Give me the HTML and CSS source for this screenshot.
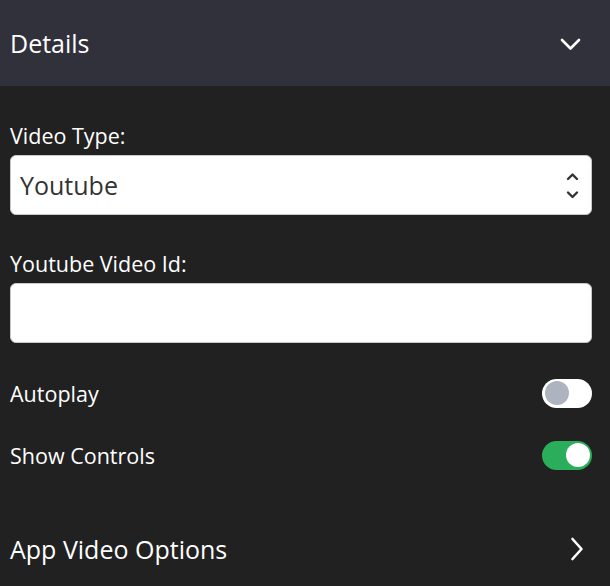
FILE: index.html
```html
<!DOCTYPE html>
<html>
<head>
<meta charset="utf-8">
<link rel="stylesheet" href="styles.css">
</head>
<body>
<div class="panel">
  <div class="header">
    <span class="title">Details</span>
    <svg class="chev-down" width="21" height="13" viewBox="0 0 21 13"><path d="M2 2 L10.5 10.5 L19 2" fill="none" stroke="#fff" stroke-width="2.6" stroke-linecap="round" stroke-linejoin="round"/></svg>
  </div>
  <div class="body">
    <div class="field">
      <label class="label">Video Type:</label>
      <div class="select">
        <span>Youtube</span>
        <svg width="13" height="28" viewBox="0 0 13 28"><path d="M2 7 L6.5 2.5 L11 7" fill="none" stroke="#333" stroke-width="2.4" stroke-linecap="round" stroke-linejoin="round"/><path d="M2 20.5 L6.5 25 L11 20.5" fill="none" stroke="#333" stroke-width="2.4" stroke-linecap="round" stroke-linejoin="round"/></svg>
      </div>
    </div>
    <div class="field">
      <label class="label">Youtube Video Id:</label>
      <div class="input"></div>
    </div>
    <div class="toggle-row first">
      <span>Autoplay</span>
      <div class="toggle off"><div class="knob"></div></div>
    </div>
    <div class="toggle-row">
      <span>Show Controls</span>
      <div class="toggle on"><div class="knob"></div></div>
    </div>
    <div class="link-row">
      <span>App Video Options</span>
      <svg width="14" height="24" viewBox="0 0 14 24"><path d="M2.5 2 L11.5 12 L2.5 22" fill="none" stroke="#fff" stroke-width="2.6" stroke-linecap="round" stroke-linejoin="round"/></svg>
    </div>
  </div>
</div>
</body>
</html>
```
FILE: styles.css
```css
* { box-sizing: border-box; }
html, body { margin: 0; padding: 0; }
body {
  background: #212121;
  font-family: "Open Sans", "Noto Sans", sans-serif;
  color: #fff;
  width: 610px;
  height: 586px;
  overflow: hidden;
}
.header {
  height: 86px;
  background: #31313b;
  display: flex;
  align-items: center;
  justify-content: space-between;
  padding: 0 29px 0 10px;
}
.title { font-size: 25px; line-height: 32px; }
.chev-down { margin-top: 2px; }
.body { padding: 35px 18px 0 10px; }
.field { display: flex; flex-direction: column; }
.field + .field { margin-top: 34px; }
.label { font-size: 21.5px; line-height: 30px; margin-bottom: 4px; }
.select, .input {
  width: 582px;
  height: 60px;
  background: #fff;
  border: 1px solid #c8c8c8;
  border-radius: 6px;
}
.select {
  display: flex;
  align-items: center;
  justify-content: space-between;
  padding: 0 12px 0 9px;
  color: #333;
  font-size: 25px;
}
.select svg { margin-top: 2px; }
.toggle-row {
  display: flex;
  align-items: center;
  justify-content: space-between;
  height: 30px;
  margin-top: 32px;
  font-size: 21.5px;
}
.toggle-row.first { margin-top: 35px; }
.toggle {
  width: 50px;
  height: 29px;
  border-radius: 15px;
  padding: 2.5px;
  display: flex;
  align-items: center;
}
.toggle .knob { width: 24px; height: 24px; border-radius: 50%; }
.toggle.off { background: #fff; }
.toggle.off .knob { background: #adb4bf; }
.toggle.on { background: #2aae5b; justify-content: flex-end; }
.toggle.on .knob { background: #fff; }
.link-row {
  display: flex;
  align-items: center;
  justify-content: space-between;
  height: 30px;
  margin-top: 64px;
  font-size: 25px;
  padding-right: 8px;
}
```
